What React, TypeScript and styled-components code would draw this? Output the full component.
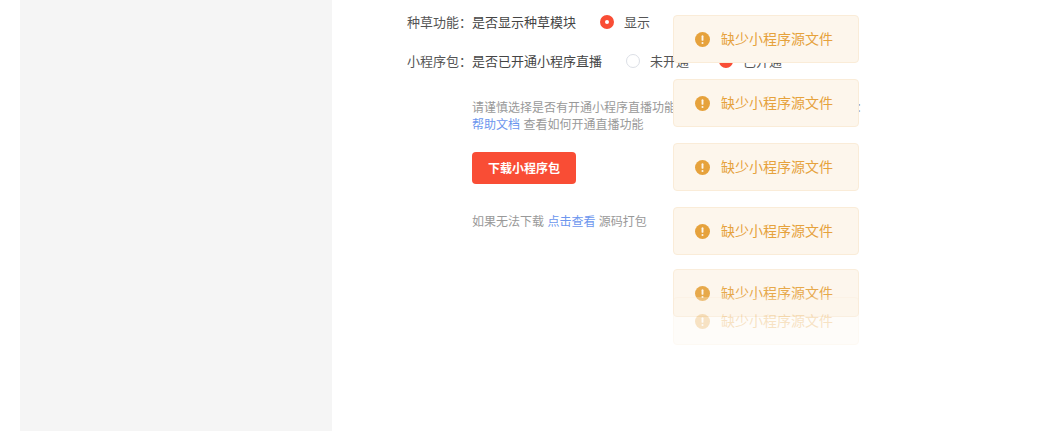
import styled, { createGlobalStyle } from 'styled-components';

const GlobalStyle = createGlobalStyle`
html, body {
  margin: 0;
  padding: 0;
  height: 100%;
  overflow: hidden;
  background: #fff;
  font-family: "Noto Sans CJK SC", "Noto Sans", sans-serif;
}
`

const toasts = [
  { top: 15, opacity: 1 },
  { top: 79, opacity: 1 },
  { top: 143, opacity: 1 },
  { top: 207, opacity: 1 },
  { top: 269, opacity: 0.92 },
  { top: 297, opacity: 0.3 },
];

function App() {
  return (
    <Page>
      <GlobalStyle />
      <Sidebar />
      <Main>
        <Row>
          <Label>种草功能：</Label>
          <Desc>是否显示种草模块</Desc>
          <Radio $checked>显示</Radio>
        </Row>
        <Row>
          <Label>小程序包：</Label>
          <Desc>是否已开通小程序直播</Desc>
          <Radio>未开通</Radio>
          <Radio $checked>已开通</Radio>
        </Row>
        <Details>
          <Hint>
            请谨慎选择是否有开通小程序直播功能，否则小程序无法发布，具体可见：
            <br />
            <HintLink>帮助文档</HintLink> 查看如何开通直播功能
          </Hint>
          <DownloadButton>下载小程序包</DownloadButton>
          <Footnote>
            如果无法下载 <HintLink>点击查看</HintLink> 源码打包
          </Footnote>
        </Details>
      </Main>
      {toasts.map((t, i) => (
        <Toast key={i} style={{ top: t.top, opacity: t.opacity }}>
          <svg width="15" height="15" viewBox="0 0 16 16">
            <circle cx="8" cy="8" r="8" fill="#e6a23c" />
            <rect x="7" y="3.4" width="2" height="6" rx="1" fill="#fdf6ec" />
            <circle cx="8" cy="11.7" r="1.1" fill="#fdf6ec" />
          </svg>
          <ToastText>缺少小程序源文件</ToastText>
        </Toast>
      ))}
    </Page>
  )
}

const Page = styled.div`
display: flex;
height: 100vh;
padding-left: 20px;
box-sizing: border-box;
position: relative;
overflow: hidden;
`

const Sidebar = styled.aside`
width: 312px;
flex-shrink: 0;
background-color: #f5f5f5;
`

const Main = styled.main`
flex: 1;
padding: 12px 0 0 75px;
font-size: 13px;
color: #444;
`

const Row = styled.div`
display: flex;
align-items: center;
height: 20px;
line-height: 20px;
margin-bottom: 19px;
white-space: nowrap;
`

const Label = styled.span`
width: 65px;
color: #555;
`

const Desc = styled.span`
margin-right: 24px;
`

const Radio = styled.span<{ $checked?: boolean }>`
display: inline-flex;
align-items: center;
margin-right: 30px;
color: #555;

&::before {
  content: '';
  box-sizing: border-box;
  width: 14px;
  height: 14px;
  margin-right: 10px;
  border-radius: 50%;
  border: ${(props) => props.$checked ? '5px solid #f94d35' : '1px solid #dcdfe6'};
  background: #fff;
}
`

const Details = styled.div`
padding: 8px 0 0 65px;
`

const Hint = styled.p`
margin: 0;
font-size: 12px;
line-height: 17px;
color: #999;
white-space: nowrap;
word-spacing: 0.7px;
`

const HintLink = styled.a`
color: #6c96ee;
`

const DownloadButton = styled.button`
display: block;
width: 104px;
height: 32px;
margin-top: 20px;
padding: 0 0 1px;
border: none;
border-radius: 4px;
background-color: #f94d35;
color: #fff;
font-family: inherit;
font-size: 12px;
font-weight: 700;
`

const Footnote = styled.p`
margin: 28px 0 0;
font-size: 12px;
line-height: 18px;
color: #999;
word-spacing: 0.7px;
`

const Toast = styled.div`
position: absolute;
left: 673px;
width: 186px;
height: 48px;
box-sizing: border-box;
display: flex;
align-items: center;
padding-left: 21px;
background-color: #fdf6ec;
border: 1px solid #faecd8;
border-radius: 4px;
`

const ToastText = styled.span`
margin-left: 11px;
margin-top: -2px;
font-size: 14px;
color: #e6a23c;
white-space: nowrap;
`

export default App;
